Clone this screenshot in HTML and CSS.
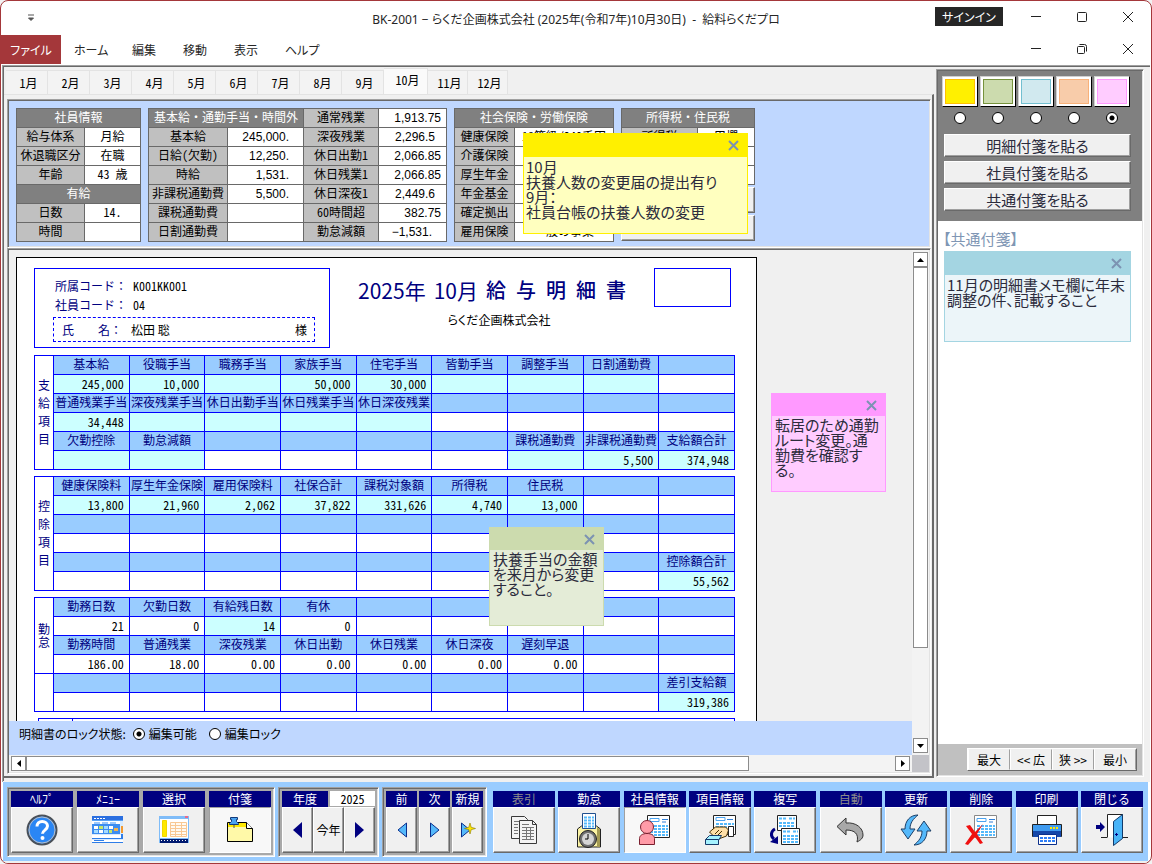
FILE: index.html
```
<!DOCTYPE html>
<html lang="ja">
<head>
<meta charset="utf-8">
<title>給料らくだプロ</title>
<link rel="stylesheet" href="styles.css">
</head>
<body>
<div class="window">
  <header class="titlebar">
    <button class="quick" aria-label="クイックアクセス"><svg width="8" height="8" viewBox="0 0 8 8"><path d="M1 1h6M1.500 4h5L4 6.500z" fill="#555" stroke="#555"/></svg></button>
    <h1>BK-2001 − らくだ企画株式会社 (2025年(令和7年)10月30日)&nbsp; -&nbsp; 給料らくだプロ</h1>
    <div class="caption top">
      <button class="signin">サインイン</button>
      <button class="cap" aria-label="最小化"><svg width="12" height="12" viewBox="0 0 12 12"><path d="M1 5.500h10"/></svg></button>
      <button class="cap" aria-label="最大化"><svg width="12" height="12" viewBox="0 0 12 12"><rect x="1.500" y="1.500" width="9" height="9" rx="1"/></svg></button>
      <button class="cap" aria-label="閉じる"><svg width="12" height="12" viewBox="0 0 12 12"><path d="M1 1l10 10M11 1L1 11"/></svg></button>
    </div>
  </header>
  <nav class="menubar">
    <button class="file">ファイル</button>
    <button class="menu wide">ホーム</button>
    <button class="menu">編集</button>
    <button class="menu">移動</button>
    <button class="menu">表示</button>
    <button class="menu">ヘルプ</button>
    <div class="caption child">
      <button class="cap" aria-label="最小化"><svg width="12" height="12" viewBox="0 0 12 12"><path d="M1 5.500h10"/></svg></button>
      <button class="cap" aria-label="元に戻す"><svg width="12" height="12" viewBox="0 0 12 12"><rect x="1.500" y="3.500" width="7" height="7" rx="1"/><path d="M3.500 1.500h5a2 2 0 0 1 2 2v5"/></svg></button>
      <button class="cap" aria-label="閉じる"><svg width="12" height="12" viewBox="0 0 12 12"><path d="M1 1l10 10M11 1L1 11"/></svg></button>
    </div>
  </nav>

  <main class="workspace">
    <section class="left">
      <div class="tabs" role="tablist">
        <button role="tab">1月</button><button role="tab">2月</button><button role="tab">3月</button><button role="tab">4月</button><button role="tab">5月</button><button role="tab">6月</button><button role="tab">7月</button><button role="tab">8月</button><button role="tab">9月</button><button role="tab" class="on" aria-selected="true">10月</button><button role="tab" class="late">11月</button><button role="tab" class="late">12月</button>
      </div>
      <div class="tabbody">
        <div class="info sunken">
          <table class="t t1">
            <colgroup><col class="c68"><col></colgroup>
            <tr><th colspan="2" class="hd">社員情報</th></tr>
            <tr><th>給与体系</th><td>月給</td></tr>
            <tr><th>休退職区分</th><td>在職</td></tr>
            <tr><th>年齢</th><td>43 歳</td></tr>
            <tr><th colspan="2" class="hd">有給</th></tr>
            <tr><th>日数</th><td>14.</td></tr>
            <tr><th>時間</th><td></td></tr>
          </table>
          <table class="t t2">
            <colgroup><col class="c79"><col class="c76"><col class="c75"><col></colgroup>
            <tr><th colspan="2" class="hd">基本給・通勤手当・時間外</th><th>通常残業</th><td class="n">1,913.75</td></tr>
            <tr><th>基本給</th><td class="n d0">245,000.</td><th>深夜残業</th><td class="n d1">2,296.5</td></tr>
            <tr><th>日給(欠勤)</th><td class="n d0">12,250.</td><th>休日出勤1</th><td class="n">2,066.85</td></tr>
            <tr><th>時給</th><td class="n d0">1,531.</td><th>休日残業1</th><td class="n">2,066.85</td></tr>
            <tr><th>非課税通勤費</th><td class="n d0">5,500.</td><th>休日深夜1</th><td class="n d1">2,449.6</td></tr>
            <tr><th>課税通勤費</th><td></td><th>60時間超</th><td class="n">382.75</td></tr>
            <tr><th>日割通勤費</th><td></td><th>勤怠減額</th><td class="n d0">−1,531.</td></tr>
          </table>
          <table class="t t3">
            <colgroup><col class="c60"><col></colgroup>
            <tr><th colspan="2" class="hd">社会保険・労働保険</th></tr>
            <tr><th>健康保険</th><td>18等級/240千円</td></tr>
            <tr><th>介護保険</th><td></td></tr>
            <tr><th>厚生年金</th><td></td></tr>
            <tr><th>年金基金</th><td></td></tr>
            <tr><th>確定拠出</th><td></td></tr>
            <tr><th>雇用保険</th><td>一般の事業</td></tr>
          </table>
          <div class="taxcol">
            <table class="t t4">
              <colgroup><col class="c76"><col></colgroup>
              <tr><th colspan="2" class="hd">所得税・住民税</th></tr>
              <tr><th>所得税</th><td>甲欄</td></tr>
              <tr><th></th><td></td></tr>
              <tr><th></th><td></td></tr>
            </table>
            <button class="raised" aria-label="所得税"></button>
            <button class="raised" aria-label="住民税"></button>
          </div>
          <article class="note yellow">
            <header><button aria-label="付箋を閉じる"><svg width="11" height="11" viewBox="0 0 11 11"><path d="M1 1l9 9M10 1L1 10"/></svg></button></header>
            <p>10月<br>扶養人数の変更届の提出有り<br>9月：<br>社員台帳の扶養人数の変更</p>
          </article>
        </div>

        <div class="slip sunken">
          <div class="canvas">
            <div class="sheet">
              <div class="sheethead">
                <div class="person">
                  <dl><dt>所属コード：</dt><dd>K001KK001</dd><dt>社員コード：</dt><dd>04</dd></dl>
                  <div class="name"><span class="nl">氏　　名：</span><span>松田 聡</span><span class="sama">様</span></div>
                </div>
                <div class="heading">
                  <h2><span>2025年</span><span>10月</span><span class="ttl">給 与 明 細 書</span></h2>
                  <p>らくだ企画株式会社</p>
                </div>
                <div class="stamp"></div>
              </div>

              <table class="p">
                <colgroup><col class="side"><col><col><col><col><col><col><col><col><col></colgroup>
                <tr class="h"><th rowspan="6" class="v"><div>支給項目</div></th><th>基本給</th><th>役職手当</th><th>職務手当</th><th>家族手当</th><th>住宅手当</th><th>皆勤手当</th><th>調整手当</th><th>日割通勤費</th><th></th></tr>
                <tr><td class="e">245,000</td><td class="e">10,000</td><td class="e"></td><td class="e">50,000</td><td class="e">30,000</td><td class="e"></td><td class="e"></td><td class="e"></td><td></td></tr>
                <tr class="h"><th>普通残業手当</th><th>深夜残業手当</th><th>休日出勤手当</th><th>休日残業手当</th><th>休日深夜残業</th><th></th><th></th><th></th><th></th></tr>
                <tr><td class="e">34,448</td><td class="e"></td><td class="e"></td><td class="e"></td><td class="e"></td><td></td><td></td><td></td><td></td></tr>
                <tr class="h"><th>欠勤控除</th><th>勤怠減額</th><th></th><th></th><th></th><th></th><th>課税通勤費</th><th>非課税通勤費</th><th>支給額合計</th></tr>
                <tr><td class="e"></td><td class="e"></td><td></td><td></td><td></td><td></td><td class="e"></td><td class="e">5,500</td><td class="e">374,948</td></tr>
              </table>

              <table class="p">
                <colgroup><col class="side"><col><col><col><col><col><col><col><col><col></colgroup>
                <tr class="h"><th rowspan="6" class="v"><div>控除項目</div></th><th>健康保険料</th><th>厚生年金保険</th><th>雇用保険料</th><th>社保合計</th><th>課税対象額</th><th>所得税</th><th>住民税</th><th></th><th></th></tr>
                <tr><td class="e">13,800</td><td class="e">21,960</td><td class="e">2,062</td><td class="e">37,822</td><td class="e">331,626</td><td class="e">4,740</td><td class="e">13,000</td><td></td><td></td></tr>
                <tr class="h"><th></th><th></th><th></th><th></th><th></th><th></th><th></th><th></th><th></th></tr>
                <tr><td></td><td></td><td></td><td></td><td></td><td></td><td></td><td></td><td></td></tr>
                <tr class="h"><th></th><th></th><th></th><th></th><th></th><th></th><th></th><th></th><th>控除額合計</th></tr>
                <tr><td></td><td></td><td></td><td></td><td></td><td></td><td></td><td></td><td class="e">55,562</td></tr>
              </table>

              <table class="p">
                <colgroup><col class="side"><col><col><col><col><col><col><col><col><col></colgroup>
                <tr class="h"><th rowspan="4" class="v tight"><div>勤怠</div></th><th>勤務日数</th><th>欠勤日数</th><th>有給残日数</th><th>有休</th><th></th><th></th><th></th><th></th><th></th></tr>
                <tr><td>21</td><td>0</td><td class="e">14</td><td>0</td><td></td><td></td><td></td><td></td><td></td></tr>
                <tr class="h"><th>勤務時間</th><th>普通残業</th><th>深夜残業</th><th>休日出勤</th><th>休日残業</th><th>休日深夜</th><th>遅刻早退</th><th></th><th></th></tr>
                <tr><td>186.00</td><td>18.00</td><td>0.00</td><td>0.00</td><td>0.00</td><td>0.00</td><td>0.00</td><td></td><td></td></tr>
                <tr class="h"><th rowspan="2" class="v"></th><th></th><th></th><th></th><th></th><th></th><th></th><th></th><th></th><th>差引支給額</th></tr>
                <tr><td></td><td></td><td></td><td></td><td></td><td></td><td></td><td></td><td class="e">319,386</td></tr>
              </table>
              <div class="memo"><span></span></div>
            </div>
            <article class="note green">
              <header><button aria-label="付箋を閉じる"><svg width="11" height="11" viewBox="0 0 11 11"><path d="M1 1l9 9M10 1L1 10"/></svg></button></header>
              <p>扶養手当の金額<br>を来月から変更<br>すること。</p>
            </article>
            <article class="note pink">
              <header><button aria-label="付箋を閉じる"><svg width="11" height="11" viewBox="0 0 11 11"><path d="M1 1l9 9M10 1L1 10"/></svg></button></header>
              <p>転居のため通勤<br>ルート変更。通<br>勤費を確認す<br>る。</p>
            </article>
          </div>
          <div class="lock">
            <span>明細書のロック状態:</span>
            <label><input type="radio" name="lock" checked>編集可能</label>
            <label><input type="radio" name="lock">編集ロック</label>
          </div>
          <div class="vbar">
            <button aria-label="上へ"><svg width="7" height="4" viewBox="0 0 7 4"><path d="M0 4h7L3.500 0z"/></svg></button>
            <div class="vthumb"></div>
            <button class="end" aria-label="下へ"><svg width="7" height="4" viewBox="0 0 7 4"><path d="M0 0h7L3.500 4z"/></svg></button>
          </div>
          <div class="hbar">
            <button aria-label="左へ"><svg width="4" height="7" viewBox="0 0 4 7"><path d="M4 0v7L0 3.500z"/></svg></button>
            <div class="hthumb"></div>
            <button class="end" aria-label="右へ"><svg width="4" height="7" viewBox="0 0 4 7"><path d="M0 0v7l4-3.500z"/></svg></button>
          </div>
          <div class="corner"></div>
        </div>
      </div>
    </section>

    <aside class="right sunken">
      <div class="palette">
        <div class="colors">
          <label><span class="sw s1"></span><input type="radio" name="color" aria-label="黄"></label>
          <label><span class="sw s2"></span><input type="radio" name="color" aria-label="緑"></label>
          <label><span class="sw s3"></span><input type="radio" name="color" aria-label="青"></label>
          <label><span class="sw s4"></span><input type="radio" name="color" aria-label="橙"></label>
          <label><span class="sw s5"></span><input type="radio" name="color" aria-label="桃" checked></label>
        </div>
        <button class="raised">明細付箋を貼る</button>
        <button class="raised">社員付箋を貼る</button>
        <button class="raised">共通付箋を貼る</button>
      </div>
      <div class="shared">
        <h3>【共通付箋】</h3>
        <article class="note blue">
          <header><button aria-label="付箋を閉じる"><svg width="11" height="11" viewBox="0 0 11 11"><path d="M1 1l9 9M10 1L1 10"/></svg></button></header>
          <p>11月の明細書メモ欄に年末<br>調整の件、記載すること</p>
        </article>
      </div>
      <div class="sizer">
        <div><button>最大</button><button>&lt;&lt; 広</button><button>狭 &gt;&gt;</button><button>最小</button></div>
      </div>
    </aside>
  </main>

  <footer class="toolbar">
    <div class="group sunken">
      <div class="tool"><span id="l1">ﾍﾙﾌﾟ</span><button aria-labelledby="l1">
        <svg width="32" height="32" viewBox="0 0 32 32"><circle cx="16" cy="16" r="14.500" fill="#2a86f4" stroke="#4a5058" stroke-width="2"/><circle cx="16" cy="16" r="13" fill="none" stroke="#b9bec6"/><path d="M11 12.500c0-3 2-5 5.200-5s5.300 1.900 5.300 4.600c0 3.900-5 4-5 7.600" fill="none" stroke="#fff" stroke-width="3"/><circle cx="16.500" cy="24" r="2" fill="#fff"/></svg></button></div>
      <div class="tool"><span id="l2">ﾒﾆｭｰ</span><button aria-labelledby="l2">
        <svg width="32" height="28" viewBox="0 0 32 28"><path fill="#d7ebff" d="M0 0h31v27H0z"/><path fill="#2b6fe0" d="M0 0h31v4H0z"/><path stroke="#fff" stroke-dasharray="2 1" d="M2 2.500h12"/><path fill="#5aa2f5" d="M0 4h31v1H0z"/><path fill="#fff" d="M0 5h28v3H0z"/><path fill="#9cc8fa" d="M2 6h6v2H2zM10 6h6v2h-6zM18 6h6v2h-6z"/><path fill="#3d8df0" d="M0 8h28v10H0z"/><path fill="#fff" d="M2 10h4v3H2zM7 14h4v3H7zM17 10h4v3h-4z"/><path fill="#c4e86b" d="M7 10h4v3H7zM17 14h3v3h-3z"/><path fill="#a5dcff" d="M2 14h4v3H2zM12 10h4v3h-4zM12 14h4v3h-4z"/><path fill="#f0b24e" d="M22 12h4v3h-4z"/><path fill="#fff" d="M0 19h31v3H0zM0 24h31v2H0z"/><path stroke="#2e7de8" d="M0 22.500h31M2 24.500h10M0 26.500h31"/><path fill="#f39a2e" d="M29 10h2v7h-2z"/><path fill="#2e7de8" d="M29 18h2v4h-2z"/></svg></button></div>
      <div class="tool"><span id="l3">選択</span><button aria-labelledby="l3">
        <svg width="32" height="28" viewBox="0 0 32 28"><path fill="#7fbcf8" d="M1 0h30v27H1z"/><path fill="#e96a8c" d="M27 0h3v2h-3z"/><path fill="#fff" d="M2 3h28v19H2z"/><path fill="#ffe800" stroke="#f0d800" d="M4.500 4.500h4v16h-4z"/><path fill="#fffaf2" stroke="#f8c894" d="M12.500 6.500h16v14h-16zM12.500 9.500h16M12.500 12.500h16M12.500 15.500h16M12.500 18.500h16M17.500 6.500v14M23.500 6.500v14"/><path fill="#001a70" d="M2 23h28v4H2z"/><path stroke="#fff" stroke-dasharray="1 2" d="M3 24.500h26"/></svg></button></div>
      <div class="tool"><span id="l4">付箋</span><button class="down" aria-labelledby="l4">
        <svg width="30" height="28" viewBox="0 0 30 28"><path d="M2.500 6.500h19l6 6v13h-25z" fill="#fff9a8" stroke="#000"/><path d="M3 7h18v4H3z" fill="#ffe800"/><path d="M21.500 6.500v6h6" fill="#fff" stroke="#000"/><path d="M5.500 1.500h7v2h-1v2l2 2v1h-9v-1l2-2v-2h-1z" fill="#4aa3f0" stroke="#123a7a"/><path d="M9 9v3" stroke="#555"/></svg></button></div>
    </div>
    <div class="group sunken year">
      <div class="yearrow"><label for="yr">年度</label><input id="yr" value="2025"></div>
      <div class="yearbtns">
        <button aria-label="前年"><svg width="9" height="16" viewBox="0 0 9 16"><path d="M9 0v16L0 8z" fill="#000080"/></svg></button><button>今年</button><button aria-label="翌年"><svg width="9" height="16" viewBox="0 0 9 16"><path d="M0 0v16l9-8z" fill="#000080"/></svg></button>
      </div>
    </div>
    <div class="group sunken nav">
      <div class="tool"><span id="n1">前</span><button aria-labelledby="n1"><svg width="10" height="16" viewBox="0 0 10 16"><path d="M9.500 1v14L1 8z" fill="#55b9fb" stroke="#0b2f8c"/></svg></button></div>
      <div class="tool"><span id="n2">次</span><button aria-labelledby="n2"><svg width="10" height="16" viewBox="0 0 10 16"><path d="M.5 1v14L9 8z" fill="#55b9fb" stroke="#0b2f8c"/></svg></button></div>
      <div class="tool"><span id="n3">新規</span><button aria-labelledby="n3"><svg width="16" height="16" viewBox="0 0 16 16"><path d="M1.500 1v14L10 8z" fill="#55b9fb" stroke="#0b2f8c"/><path d="M10 1l1.200 4.300L15.500 6.500l-4.300 1.200L10 12 8.800 7.700 4.500 6.500l4.300-1.200z" fill="#ffe600" stroke="#8a7a00" stroke-width=".6"/></svg></button></div>
    </div>
    <div class="free">
      <div class="tool off"><span id="f1">表引</span><button aria-labelledby="f1">
        <svg width="30" height="30" viewBox="0 0 30 30"><g fill="#f4f4f4" stroke="#3a3a3a"><path d="M2.500 1.500h13l3 3v19h-16z"/><path d="M10.500 5.500h13l4 4v19h-17z"/><path d="M23.500 5.500v4h4" fill="none"/></g><path stroke="#777" d="M5 6.500h5M5 9.500h4M5 12.500h4M5 15.500h4M5 18.500h4M13 12.500h12M13 15.500h12M13 18.500h12M13 21.500h12M13 24.500h12M17.500 12v13M21.500 12v13M13 9.500h7"/></svg></button></div>
      <div class="tool"><span id="f2">勤怠</span><button aria-labelledby="f2">
        <svg width="30" height="36" viewBox="0 0 30 36"><path d="M3.500 35v-18l4-3h15l4 3v18z" fill="#fbf3a4" stroke="#222"/><path d="M23 15l3 2.500V35h-3z" fill="#a49b54"/><path d="M8.500 1.500h13v15h-13z" fill="#fff" stroke="#1f4f8f"/><path d="M10 5.500h10M10 8.500h10M10 11.500h10M10 14.500h10" stroke="#55b9fb" stroke-width="2" stroke-dasharray="3 1"/><circle cx="14" cy="27" r="8.500" fill="#707070" stroke="#222"/><circle cx="14" cy="27" r="6" fill="#d5d5d5"/><path d="M14 22v5h-3" fill="none" stroke="#000"/></svg></button></div>
      <div class="tool"><span id="f3">社員情報</span><button class="down" aria-labelledby="f3">
        <svg width="34" height="32" viewBox="0 0 34 32"><path d="M9.500 1.500h22v22h-22z" fill="#fff" stroke="#222"/><path d="M12 4.500h9v3h-9z" fill="#fff" stroke="#4aa3f0"/><path d="M24 5.500h6M24 8h4" stroke="#2f7fd8"/><path d="M12 12h18M12 15h18M12 18h18M12 21h18" stroke="#55b9fb" stroke-width="2" stroke-dasharray="3 1"/><circle cx="9" cy="13" r="6.500" fill="#ff9ba8" stroke="#7b2030"/><path d="M1.500 30.500v-6c0-3 3-5 7.500-5s7.500 2 7.500 5v6z" fill="#ff9ba8" stroke="#7b2030"/></svg></button></div>
      <div class="tool"><span id="f4">項目情報</span><button aria-labelledby="f4">
        <svg width="34" height="32" viewBox="0 0 34 32"><path d="M10.500 1.500h22v19h-22z" fill="#fff" stroke="#222"/><path d="M13 3.500h9v3h-9z" fill="#fff" stroke="#4aa3f0"/><path d="M24 5.500h6" stroke="#2f7fd8"/><path d="M13 10h18M13 13h18M13 16h18" stroke="#55b9fb" stroke-width="2" stroke-dasharray="3 1"/><path d="M6.500 18l6-5h10l3 3-2 6-8 3-5-3z" fill="#ffe0a8" stroke="#4a3000"/><path d="M16 16l-4 4M19 17l-4 4" stroke="#4a3000"/><path d="M25.500 12.500h5v10h-5z" fill="#fff" stroke="#222"/><path d="M2.500 25.500l4-4h12l-3 5v4h-13z" fill="#a5f2ff" stroke="#163a6a"/><path d="M2.500 25.500h13v5" fill="none" stroke="#163a6a"/></svg></button></div>
      <div class="tool"><span id="f5">複写</span><button aria-labelledby="f5">
        <svg width="32" height="32" viewBox="0 0 32 32"><path d="M8.500 1.500h19v15h-19z" fill="#fff" stroke="#222"/><path d="M10 4.500h7M20 4.500h6M10 9h16M10 12h16" stroke="#55b9fb" stroke-width="2" stroke-dasharray="3 1"/><path d="M12.500 14.500h18v16h-18z" fill="#fff" stroke="#222"/><path d="M14 17.500h7M24 17.500h5M14 22h15M14 25h15M14 28h15" stroke="#55b9fb" stroke-width="2" stroke-dasharray="3 1"/><path d="M6 15c-4 2-5 7-1 10" fill="none" stroke="#000080" stroke-width="3"/><path d="M9 22v8l-8-2z" fill="#000080"/></svg></button></div>
      <div class="tool off"><span id="f6">自動</span><button aria-labelledby="f6">
        <svg width="32" height="28" viewBox="0 0 32 28"><path d="M11 2v5c10-1 17 5 17 12 0 3-2 5-6 7 2-8-2-12-11-12v5L2 10.500z" fill="#a8a8a8" stroke="#333" stroke-linejoin="round"/></svg></button></div>
      <div class="tool"><span id="f7">更新</span><button aria-labelledby="f7">
        <svg width="34" height="32" viewBox="0 0 34 32"><path d="M19 1c-8 0-13 6-13 14H2l7 10 7-10h-5c0-6 3-10 8-14z" fill="#55b9fb" stroke="#1d3f66"/><path d="M15 31c8 0 13-6 13-14h4L25 7l-7 10h5c0 6-3 10-8 14z" fill="#55b9fb" stroke="#1d3f66"/></svg></button></div>
      <div class="tool"><span id="f8">削除</span><button aria-labelledby="f8">
        <svg width="34" height="32" viewBox="0 0 34 32"><path d="M10.500 1.500h22v22h-22z" fill="#fff" stroke="#888"/><path d="M13 4.500h9v3h-9z" fill="#fff" stroke="#4aa3f0"/><path d="M25 5.500h6M25 8h4" stroke="#2f7fd8"/><path d="M13 12h18M13 15h18M13 18h18M13 21h18" stroke="#55b9fb" stroke-width="2" stroke-dasharray="3 1"/><path d="M2 12l4-1 5 7 8-8-6 10 6 9-3 1-5-7-7 8-3-1 7-10z" fill="#f01010"/></svg></button></div>
      <div class="tool"><span id="f9">印刷</span><button aria-labelledby="f9">
        <svg width="32" height="32" viewBox="0 0 32 32"><path d="M6.500 1.500h19v10h-19z" fill="#fff" stroke="#222"/><path d="M1.500 10.500h29v12h-29z" fill="#3f9bf0" stroke="#222"/><path d="M2 17h28v6H2z" fill="#1446a8"/><path d="M19 14h8" stroke="#ffe600" stroke-width="2" stroke-dasharray="2 1"/><path d="M7.500 20.500h18v10h-18z" fill="#fff" stroke="#0b2f8c"/><path d="M9 24h15M9 27h15" stroke="#2f7ff8" stroke-width="2" stroke-dasharray="3 1"/></svg></button></div>
      <div class="tool"><span id="f10">閉じる</span><button aria-labelledby="f10">
        <svg width="34" height="32" viewBox="0 0 34 32"><path d="M6 23.500h6M28 23.500h5" stroke="#222"/><path d="M12.500 23.500v-23h15v23" fill="#fff" stroke="#222"/><path d="M18.500 7.500l9-7v24l-9 7z" fill="#49b4f8" stroke="#123a6a"/><path d="M20 20.500h3M21.500 19v3" stroke="#000080"/><path d="M1 11h4V8l5 5-5 5v-3H1z" fill="#000080"/></svg></button></div>
    </div>
  </footer>
</div>
</body>
</html>
```
FILE: styles.css
```
* { box-sizing: border-box; }
body, h1, h2, h3, p, dl, dd { margin: 0; font-size: 12px; font-weight: 400; }
body {
  font: 12px/16px "Noto Sans CJK JP", sans-serif;
  color: #000;
  background: #f2f2f2;
}
button, input {
  font: inherit;
  color: inherit;
  margin: 0;
  padding: 0;
  border: 0;
  background: none;
  border-radius: 0;
}
svg { display: block; flex: none; }

.window {
  height: 100vh;
  min-height: 600px;
  display: flex;
  flex-direction: column;
  border: 1px solid #a4373a;
  border-radius: 8px;
  background: #fff;
  overflow: hidden;
}
.titlebar {
  flex: 0 0 34px;
  display: grid;
  grid-template-columns: 1fr auto 1fr;
  align-items: center;
  color: #262626;
}
.titlebar h1 {
  font-family: "Noto Sans", "Noto Sans CJK JP", sans-serif;
  font-feature-settings: "palt";
  padding-top: 3px;
}
.quick { justify-self: start; margin-left: 26px; }
.caption { display: flex; justify-content: flex-end; align-items: center; }
.caption.top { padding-bottom: 3px; }
.signin {
  width: 68px;
  height: 19px;
  margin-right: 10px;
  background: #262626;
  color: #fff;
  font-feature-settings: "palt";
  line-height: 18px;
}
.cap { width: 46px; height: 28px; display: flex; align-items: center; justify-content: center; }
.cap svg { fill: none; stroke: #222; }
.menubar { flex: 0 0 30px; display: flex; align-items: flex-start; color: #262626; font-feature-settings: "palt"; }
.file { width: 60px; height: 29px; background: #a4373a; color: #fff; margin-right: 13px; }
.menu { width: 51px; height: 29px; text-align: left; white-space: nowrap; }
.menu.wide { width: 58px; }
.caption.child { flex: 1; }

.workspace {
  flex: 1;
  min-height: 0;
  display: flex;
  gap: 2px;
  margin: 0 1px;
  padding-right: 6px;
  border: solid #a0a0a0;
  border-width: 1px 0 0 1px;
  box-shadow: inset 1px 1px 0 #696969;
  background: #f0f0f0;
}
.left { flex: 1; min-width: 0; display: flex; flex-direction: column; padding: 1px 0 4px 1px; }
.tabs { flex: 0 0 27px; display: flex; align-items: flex-end; padding-left: 2px; }
.tabs button {
  width: 42px;
  height: 24px;
  padding-left: 4px;
  background: #f3f3f3;
  border: 1px solid #e3e3e3;
  border-width: 1px 1px 0 0;
  font-feature-settings: "hwid";
}
.tabs .on { width: 44px; height: 26px; background: #fafafa; padding-bottom: 4px; }
.tabs .late { width: 40px; }
.tabbody {
  flex: 1;
  min-height: 0;
  display: flex;
  flex-direction: column;
  padding: 4px 1px 2px 3px;
  border-top: 1px solid #e3e3e3;
  border-right: 2px solid #696969;
  border-bottom: 2px solid #696969;
}
.sunken {
  border: 1px solid;
  border-color: #a0a0a0 #fff #fff #a0a0a0;
  box-shadow: inset 1px 1px 0 #696969, inset -1px -1px 0 #e3e3e3;
  padding: 1px;
}
.raised {
  background: #f0f0f0;
  border: 1px solid;
  border-color: #fff #696969 #696969 #fff;
  box-shadow: inset -1px -1px 0 #a0a0a0;
}

/* summary tables above the slip */
.info {
  flex: 0 0 149px;
  position: relative;
  display: flex;
  align-items: flex-start;
  gap: 7px;
  padding: 8px 8px 5px;
  background: #bfd7ff;
}
.t { border-collapse: collapse; table-layout: fixed; flex: none; }
.t th, .t td {
  height: 19px;
  padding: 0 0 2px;
  border: 1px solid #696969;
  font-weight: 400;
  text-align: center;
  line-height: 16px;
  white-space: nowrap;
  overflow: hidden;
}
.t th { background: #c0c0c0; font-feature-settings: "hwid"; }
.t td { background: #fff; font-feature-settings: "hwid"; }
.t .hd { background: #808080; color: #fff; }
.t .n { font: 12px/16px "Liberation Sans", "Noto Sans CJK JP", sans-serif; text-align: right; padding: 0 5px 0 0; }
.t .d1 { padding-right: 11px; }
.t .d0 { padding-right: 14px; }
.t1 { width: 125px; }
.t2 { width: 299px; }
.t3 { width: 160px; }
.t4 { width: 134px; }
.c60 { width: 60px; } .c68 { width: 68px; } .c75 { width: 75px; } .c76 { width: 76px; } .c79 { width: 79px; }
.taxcol { width: 134px; display: flex; flex-direction: column; gap: 2px; }
.taxcol .raised { height: 26px; }

.note {
  position: absolute;
  border: 1px solid;
  color: #2b2b3c;
  font-size: 15px;
  line-height: 15px;
  font-feature-settings: "palt";
}
.note header { height: 22px; display: flex; justify-content: flex-end; align-items: center; padding-right: 8px; }
.note button svg { fill: none; stroke: #7c93b2; stroke-width: 2; }
.note p { font-size: 15px; padding: 1px 3px; white-space: nowrap; }
.yellow { left: 515px; top: 33px; width: 225px; height: 101px; background: #ffffbf; border-color: #fff000; }
.yellow header { height: 23px; background: #fff000; }
.green { left: 480px; top: 277px; width: 115px; height: 99px; background: #e4ecd7; border-color: #ccdbae; }
.green header { background: #ccdbae; }
.pink { left: 762px; top: 143px; width: 115px; height: 99px; background: #ffccff; border-color: #ff99ff; }
.pink header { background: #ff99ff; }
.note.blue { position: static; height: 91px; background: #ecf5f9; border-color: #a4d5e2; }
.blue header { height: 23px; background: #a4d5e2; }
.yellow p, .blue p { padding: 2px; }

/* pay slip */
.slip {
  flex: 1;
  min-height: 0;
  display: grid;
  grid-template-columns: minmax(0, 1fr) 17px;
  grid-template-rows: minmax(0, 1fr) 34px 17px;
}
.canvas { position: relative; overflow: hidden; background: #f0f0f0; padding: 7px 7px 0; }
.sheet {
  width: 741px;
  min-height: 600px;
  padding: 10px 17px;
  border: 1px solid #000;
  background: #fff;
  display: flex;
  flex-direction: column;
  gap: 6px;
}
.sheethead { display: flex; align-items: flex-start; margin-bottom: 1px; padding-right: 8px; }
.person { width: 296px; height: 80px; border: 1px solid #00f; padding: 7px 14px 6px 18px; }
.person dl { display: grid; grid-template-columns: 78px 1fr; line-height: 19px; padding-left: 2px; }
.person dt { color: #000080; }
.person dt, .person dd { height: 19px; white-space: nowrap; }
.person dd { font-feature-settings: "hwid"; }
.name { height: 25px; margin-top: 3px; border: 1px dashed #00f; display: flex; align-items: center; padding: 0 7px 0 8px; line-height: 20px; }
.name .nl { color: #000080; width: 69px; white-space: nowrap; }
.sama { margin-left: auto; }
.heading { flex: 1; display: flex; flex-direction: column; align-items: center; padding-top: 8px; }
.heading h2 { display: flex; gap: 8px; color: #000080; font-size: 21px; line-height: 28px; white-space: nowrap; }
.heading .ttl { font-size: 20px; font-weight: 500; font-feature-settings: "hwid"; }
.heading p { line-height: 20px; padding-top: 6px; padding-left: 14px; font-feature-settings: "palt"; }
.stamp { width: 77px; height: 39px; border: 1px solid #00f; }

.p { width: 701px; border-collapse: collapse; table-layout: fixed; }
.p .side { width: 19px; }
.p th, .p td {
  height: 19px;
  padding: 0 0 2px;
  border: 1px solid #00f;
  line-height: 16px;
  font-weight: 400;
  white-space: nowrap;
  overflow: hidden;
}
.p th { color: #000080; text-align: center; background: #9cf; }
.p td { text-align: right; padding: 0 5px 0 0; font-feature-settings: "hwid"; background: #fff; }
.p .e { background: #cff; }
.p .v { background: #fff; white-space: normal; }
.v div { width: 12px; margin: 0 auto; line-height: 18px; word-break: break-all; }
.tight div { line-height: 13px; }
.memo { height: 60px; margin-left: 4px; border: 1px solid #00f; display: flex; width: 697px; }
.memo span { width: 34px; border-right: 1px solid #00f; }

.lock { grid-column: 1; background: #bfd7ff; display: flex; gap: 12px; padding: 5px 10px; }
.lock span { margin-right: -5px; font-feature-settings: "palt"; }
.lock label { display: flex; gap: 4px; align-items: center; height: 16px; font-feature-settings: "palt"; }
input[type="radio"] {
  appearance: none;
  flex: none;
  width: 12px;
  height: 12px;
  border: 1px solid #000;
  border-radius: 50%;
  background: #fff;
}
input[type="radio"]:checked { background: radial-gradient(circle, #000 2px, #fff 3px); }
.vbar { grid-column: 2; grid-row: 1 / 3; background: #f3f3f3; display: flex; flex-direction: column; padding: 2px 1px; }
.hbar { grid-column: 1; grid-row: 3; background: #f3f3f3; display: flex; padding: 1px 2px; }
.corner { background: #c3c3c8; }
.vbar button, .hbar button { flex: 0 0 15px; width: 15px; height: 15px; border: 1px solid #8c8c8c; background: #fff; display: flex; align-items: center; justify-content: center; }
.vbar .end, .hbar .end { margin: auto 0 0 auto; }
.vthumb { flex: 0 1 76%; border: 1px solid #8c8c8c; background: #fff; }
.hthumb { flex: 0 1 723px; border: 1px solid #8c8c8c; background: #fff; }

/* sticky note pane */
.right { flex: 0 0 208px; display: flex; flex-direction: column; margin: 3px 0 5px; background: #fff; }
.palette { flex: 0 0 150px; background: #808080; padding: 5px 4px; color: #2b2b3c; }
.colors { display: flex; gap: 2px; margin-bottom: 10px; }
.colors label { display: flex; flex-direction: column; align-items: center; gap: 5px; }
.sw { width: 36px; height: 31px; border: 1px solid; border-color: #d0d0d0 #000 #000 #d0d0d0; background: #fff; padding: 2px; display: flex; }
.sw::before { content: ""; flex: 1; border: 1px solid; }
.s1::before { background: #fff000; border-color: #ffc000; }
.s2::before { background: #ccdbae; border-color: #76923c; }
.s3::before { background: #d1e9ef; border-color: #72bfd0; }
.s4::before { background: #f8ccaa; border-color: #f8b179; }
.s5::before { background: #ffccff; border-color: #ff99ff; }
.palette .raised { display: block; width: 187px; height: 23px; margin: 0 0 4px 2px; font-size: 15px; line-height: 18px; font-feature-settings: "palt"; }
.shared { flex: 1; padding: 9px 11px 0 5px; min-height: 0; overflow: hidden; }
.shared h3 { color: #8096b4; font-size: 15px; line-height: 18px; margin-bottom: 3px; font-feature-settings: "palt"; }
.shared .note { margin-left: 1px; }
.sizer { flex: 0 0 30px; background: #c0c0c0; display: flex; justify-content: flex-end; padding: 4px 5px; }
.sizer div { display: flex; background: #f0f0f0; border: 1px solid; border-color: #fff #696969 #696969 #fff; height: 23px; }
.sizer button { width: 42px; border: 1px solid; border-color: transparent #a0a0a0 transparent #fff; line-height: 16px; }

/* bottom tool bar */
.toolbar { flex: 0 0 79px; display: flex; gap: 3px; margin: 0 3px 2px 2px; padding: 5px 5px 4px 4px; background: #9cf; box-shadow: 0 -1px 0 #f0f0f0, 0 2px 0 #f0f0f0; }
.group { display: flex; gap: 4px; padding: 3px; background: #a9a9a9; flex: none; }
.tool { display: flex; flex-direction: column; width: 62px; }
.tool span, .yearrow label {
  height: 16px;
  line-height: 15px;
  background: #000080;
  color: #fff;
  text-align: center;
  white-space: nowrap;
}
.off span { color: #8c8c8c; }
.tool button, .yearbtns button {
  height: 46px;
  display: flex;
  align-items: center;
  justify-content: center;
  background: #f0f0f0;
  border: 1px solid;
  border-color: #fff #696969 #696969 #fff;
  box-shadow: inset -1px -1px 0 #a0a0a0;
}
.tool .down { background: #f8f8f8; border-color: #a0a0a0 #fff #fff #a0a0a0; box-shadow: none; }
.year { flex-direction: column; gap: 0; width: 101px; }
.yearrow { display: flex; gap: 2px; }
.yearrow label { width: 46px; }
.yearrow input { width: 45px; height: 15px; background: #fff; text-align: center; font-feature-settings: "hwid"; }
.yearbtns { display: flex; }
.yearbtns button { width: 31px; }
.nav { gap: 2px; width: 105px; }
.nav .tool { width: 31px; }
.free { flex: 1; display: flex; justify-content: space-between; padding-top: 4px; margin-left: 3px; }
```
